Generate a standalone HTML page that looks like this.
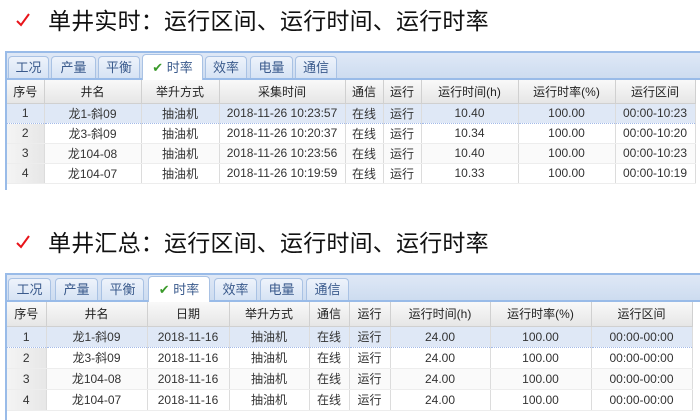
<!DOCTYPE html>
<html><head><meta charset="utf-8"><style>
body{margin:0;width:700px;height:420px;background:#fff;position:relative;overflow:hidden;font-family:"Liberation Sans","Noto Sans CJK SC",sans-serif;}
.t{position:absolute;left:48px;font-size:23px;letter-spacing:0.2px;color:#111;line-height:26px;white-space:nowrap}
.ck{position:absolute;left:15px;width:16px;height:16px}
.panel{position:absolute;left:5px;border-left:2px solid #99bbe8;}
.strip{position:absolute;left:0;height:25px;background:linear-gradient(#dfe8f6,#cddcf0);border-top:2px solid #99bbe8;border-bottom:2px solid #99bbe8}
.tab{position:absolute;top:3px;height:22px;border:1px solid #a9c2e4;border-bottom:none;border-radius:4px 4px 0 0;background:linear-gradient(#eef3fb,#d6e3f4);font-size:13px;color:#3a5a8c;text-align:center;line-height:22px;box-sizing:border-box}
.tab.a{background:#fff;top:1px;height:26px;line-height:26px}
table{position:absolute;left:0;border-collapse:collapse;table-layout:fixed;font-size:12px;color:#333}
td{border-right:1px solid #dcdcdc;border-bottom:1px solid #ededed;text-align:center;padding:0;white-space:nowrap;overflow:hidden}
tr.h td{background:linear-gradient(#f9f9f9,#e6e6e6);border-right:1px solid #d0d0d0;border-bottom:1px solid #d0d0d0;color:#222}
td.n{background:linear-gradient(90deg,#f4f4f4,#e7e7e7)}
tr.s td{background:#dfe8f6;border-bottom:1px dotted #a3bae9;border-top:1px dotted #a3bae9}
tr.s td.n{background:#dfe8f6}
tr.z td{background:#fafafa}
tr.z td.n{background:linear-gradient(90deg,#f4f4f4,#e7e7e7)}
</style></head><body>

<svg class="ck" style="top:12px" viewBox="0 0 16 16"><path d="M2 9 L6 13 L14 2" fill="none" stroke="#e8141a" stroke-width="2"/></svg>
<div class="t" style="top:8px">单井实时：运行区间、运行时间、运行时率</div>

<div class="panel" style="top:51px;height:139px;width:695px">
 <div class="strip" style="top:0;width:695px">
  <div class="tab" style="left:1px;width:41px">工况</div>
  <div class="tab" style="left:44px;width:45px">产量</div>
  <div class="tab" style="left:91px;width:42px">平衡</div>
  <div class="tab a" style="left:135px;width:61px"><span style="color:#3a9a2a">✔</span> 时率</div>
  <div class="tab" style="left:198px;width:42px">效率</div>
  <div class="tab" style="left:243px;width:43px">电量</div>
  <div class="tab" style="left:288px;width:42px">通信</div>
 </div>
 <table style="top:29px;width:688px">
  <colgroup><col style="width:37px"><col style="width:97px"><col style="width:78px"><col style="width:126px"><col style="width:38px"><col style="width:38px"><col style="width:97px"><col style="width:97px"><col style="width:80px"></colgroup>
  <tr class="h" style="height:23px"><td>序号</td><td>井名</td><td>举升方式</td><td>采集时间</td><td>通信</td><td>运行</td><td>运行时间(h)</td><td>运行时率(%)</td><td>运行区间</td></tr>
  <tr class="s" style="height:20px"><td class="n">1</td><td>龙1-斜09</td><td>抽油机</td><td>2018-11-26 10:23:57</td><td>在线</td><td>运行</td><td>10.40</td><td>100.00</td><td>00:00-10:23</td></tr>
  <tr style="height:20px"><td class="n">2</td><td>龙3-斜09</td><td>抽油机</td><td>2018-11-26 10:20:37</td><td>在线</td><td>运行</td><td>10.34</td><td>100.00</td><td>00:00-10:20</td></tr>
  <tr class="z" style="height:20px"><td class="n">3</td><td>龙104-08</td><td>抽油机</td><td>2018-11-26 10:23:56</td><td>在线</td><td>运行</td><td>10.40</td><td>100.00</td><td>00:00-10:23</td></tr>
  <tr style="height:20px"><td class="n">4</td><td>龙104-07</td><td>抽油机</td><td>2018-11-26 10:19:59</td><td>在线</td><td>运行</td><td>10.33</td><td>100.00</td><td>00:00-10:19</td></tr>
 </table>
</div>

<svg class="ck" style="top:234px" viewBox="0 0 16 16"><path d="M2 9 L6 13 L14 2" fill="none" stroke="#e8141a" stroke-width="2"/></svg>
<div class="t" style="top:230px">单井汇总：运行区间、运行时间、运行时率</div>

<div class="panel" style="top:273px;height:147px;width:695px">
 <div class="strip" style="top:0;width:695px">
  <div class="tab" style="left:1px;width:43px">工况</div>
  <div class="tab" style="left:48px;width:43px">产量</div>
  <div class="tab" style="left:94px;width:43px">平衡</div>
  <div class="tab a" style="left:141px;width:62px"><span style="color:#3a9a2a">✔</span> 时率</div>
  <div class="tab" style="left:207px;width:43px">效率</div>
  <div class="tab" style="left:253px;width:43px">电量</div>
  <div class="tab" style="left:299px;width:43px">通信</div>
 </div>
 <table style="top:29px;width:685px">
  <colgroup><col style="width:39px"><col style="width:101px"><col style="width:82px"><col style="width:80px"><col style="width:40px"><col style="width:41px"><col style="width:100px"><col style="width:101px"><col style="width:101px"></colgroup>
  <tr class="h" style="height:24px"><td>序号</td><td>井名</td><td>日期</td><td>举升方式</td><td>通信</td><td>运行</td><td>运行时间(h)</td><td>运行时率(%)</td><td>运行区间</td></tr>
  <tr class="s" style="height:21px"><td class="n">1</td><td>龙1-斜09</td><td>2018-11-16</td><td>抽油机</td><td>在线</td><td>运行</td><td>24.00</td><td>100.00</td><td>00:00-00:00</td></tr>
  <tr style="height:21px"><td class="n">2</td><td>龙3-斜09</td><td>2018-11-16</td><td>抽油机</td><td>在线</td><td>运行</td><td>24.00</td><td>100.00</td><td>00:00-00:00</td></tr>
  <tr class="z" style="height:21px"><td class="n">3</td><td>龙104-08</td><td>2018-11-16</td><td>抽油机</td><td>在线</td><td>运行</td><td>24.00</td><td>100.00</td><td>00:00-00:00</td></tr>
  <tr style="height:21px"><td class="n">4</td><td>龙104-07</td><td>2018-11-16</td><td>抽油机</td><td>在线</td><td>运行</td><td>24.00</td><td>100.00</td><td>00:00-00:00</td></tr>
 </table>
</div>
</body></html>
